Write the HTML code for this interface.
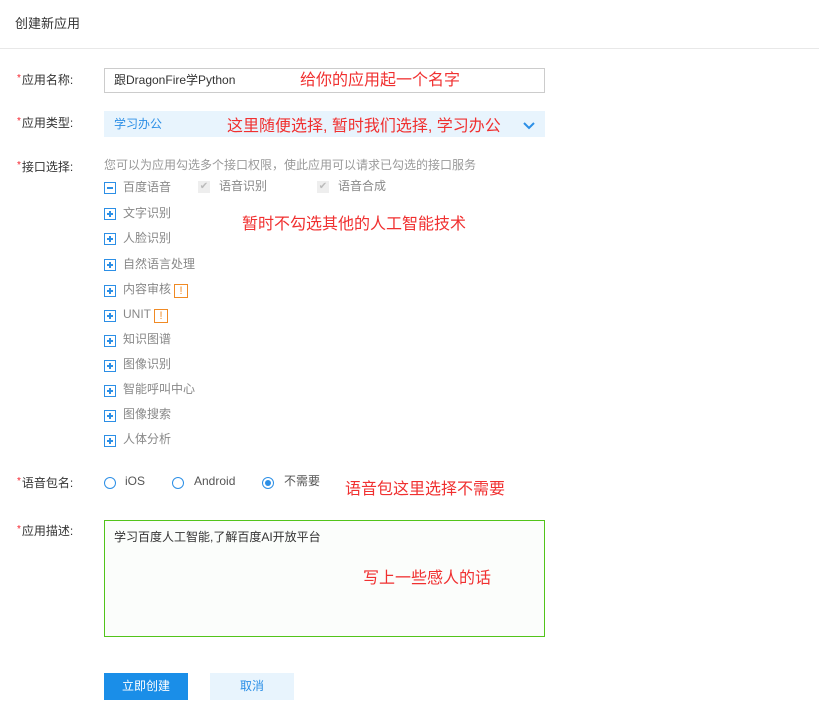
<!DOCTYPE html>
<html><head><meta charset="utf-8"><style>
body{margin:0;width:819px;height:711px;background:#fff;position:relative;font-family:"Liberation Sans","Noto Sans CJK SC",sans-serif;overflow:hidden}
.a{position:absolute;white-space:nowrap;line-height:1}
.lbl{font-size:12px;color:#333}
.lbl b{color:#f5222d;font-weight:normal;font-size:10px;vertical-align:top;margin-right:1px}
.red{color:#f03030;font-size:16px}
.ti{position:absolute;left:104px;width:10px;height:10px;border:1px solid #2c8fe6}
.ti:before{content:"";position:absolute;left:2px;top:4px;width:6px;height:2px;background:#2c8fe6}
.ti.p:after{content:"";position:absolute;left:4px;top:2px;width:2px;height:6px;background:#2c8fe6}
.tt{font-size:12px;color:#888}
.rad{position:absolute;width:10px;height:10px;border:1px solid #2c8fe6;border-radius:50%}
.ex{position:absolute;width:12px;height:12px;border:1px solid #f08a24;color:#f08a24;font-size:11px;text-align:center;line-height:12px}
.cb{position:absolute;width:12px;height:12px;background:#eee;color:#bbb;font-size:10px;line-height:12px;text-align:center}
</style></head><body>
<div class="a" style="left:15px;top:17px;font-size:13px;color:#333">创建新应用</div>
<div style="position:absolute;left:0;top:48px;width:819px;height:1px;background:#e8e8e8"></div>

<div class="a lbl" style="left:17px;top:74px"><b>*</b>应用名称:</div>
<div style="position:absolute;left:104px;top:68px;width:439px;height:23px;border:1px solid #ccc"></div>
<div class="a" style="left:114px;top:74px;font-size:12px;color:#333">跟DragonFire学Python</div>
<div class="a red" style="left:300px;top:73px">给你的应用起一个名字</div>

<div class="a lbl" style="left:17px;top:117px"><b>*</b>应用类型:</div>
<div style="position:absolute;left:104px;top:111px;width:441px;height:26px;background:#e8f4fd"></div>
<div class="a" style="left:114px;top:118px;font-size:12px;color:#2c8fe6">学习办公</div>
<div class="a red" style="left:227px;top:119px">这里随便选择, 暂时我们选择, 学习办公</div>
<svg style="position:absolute;left:522px;top:121px" width="14" height="9"><path d="M2 2 L7 7 L12 2" stroke="#2c8fe6" stroke-width="2" fill="none"/></svg>

<div class="a lbl" style="left:17px;top:161px"><b>*</b>接口选择:</div>
<div class="a" style="left:104px;top:159px;font-size:12px;color:#999">您可以为应用勾选多个接口权限，使此应用可以请求已勾选的接口服务</div>

<div class="ti" style="top:182px"></div><div class="a tt" style="left:123px;top:181px">百度语音</div>
<div class="cb" style="left:198px;top:181px">✔</div><div class="a tt" style="left:219px;top:180px">语音识别</div>
<div class="cb" style="left:317px;top:181px">✔</div><div class="a tt" style="left:338px;top:180px">语音合成</div>
<div class="a red" style="left:242px;top:217px">暂时不勾选其他的人工智能技术</div>

<div class="ti p" style="top:208px"></div><div class="a tt" style="left:123px;top:207px">文字识别</div>
<div class="ti p" style="top:233px"></div><div class="a tt" style="left:123px;top:232px">人脸识别</div>
<div class="ti p" style="top:259px"></div><div class="a tt" style="left:123px;top:258px">自然语言处理</div>
<div class="ti p" style="top:285px"></div><div class="a tt" style="left:123px;top:283px">内容审核</div><div class="ex" style="left:174px;top:284px">!</div>
<div class="ti p" style="top:310px"></div><div class="a tt" style="left:123px;top:308px">UNIT</div><div class="ex" style="left:154px;top:309px">!</div>
<div class="ti p" style="top:335px"></div><div class="a tt" style="left:123px;top:333px">知识图谱</div>
<div class="ti p" style="top:360px"></div><div class="a tt" style="left:123px;top:358px">图像识别</div>
<div class="ti p" style="top:385px"></div><div class="a tt" style="left:123px;top:383px">智能呼叫中心</div>
<div class="ti p" style="top:410px"></div><div class="a tt" style="left:123px;top:408px">图像搜索</div>
<div class="ti p" style="top:435px"></div><div class="a tt" style="left:123px;top:433px">人体分析</div>

<div class="a lbl" style="left:17px;top:477px"><b>*</b>语音包名:</div>
<div class="rad" style="left:104px;top:477px"></div><div class="a" style="left:125px;top:475px;font-size:12px;color:#555">iOS</div>
<div class="rad" style="left:172px;top:477px"></div><div class="a" style="left:194px;top:475px;font-size:12px;color:#555">Android</div>
<div class="rad" style="left:262px;top:477px"><div style="position:absolute;left:2px;top:2px;width:6px;height:6px;border-radius:50%;background:#2c8fe6"></div></div><div class="a" style="left:284px;top:475px;font-size:12px;color:#555">不需要</div>
<div class="a red" style="left:345px;top:482px">语音包这里选择不需要</div>

<div class="a lbl" style="left:17px;top:525px"><b>*</b>应用描述:</div>
<div style="position:absolute;left:104px;top:520px;width:439px;height:115px;border:1px solid #52c41a;background:#fbfdfb"></div>
<div class="a" style="left:114px;top:531px;font-size:12px;color:#333">学习百度人工智能,了解百度AI开放平台</div>
<div class="a red" style="left:363px;top:571px">写上一些感人的话</div>

<div style="position:absolute;left:104px;top:673px;width:84px;height:27px;background:#1a8ee8;color:#fff;font-size:12px;text-align:center;line-height:27px">立即创建</div>
<div style="position:absolute;left:210px;top:673px;width:84px;height:27px;background:#e8f4fd;color:#2c8fe6;font-size:12px;text-align:center;line-height:27px">取消</div>
</body></html>
